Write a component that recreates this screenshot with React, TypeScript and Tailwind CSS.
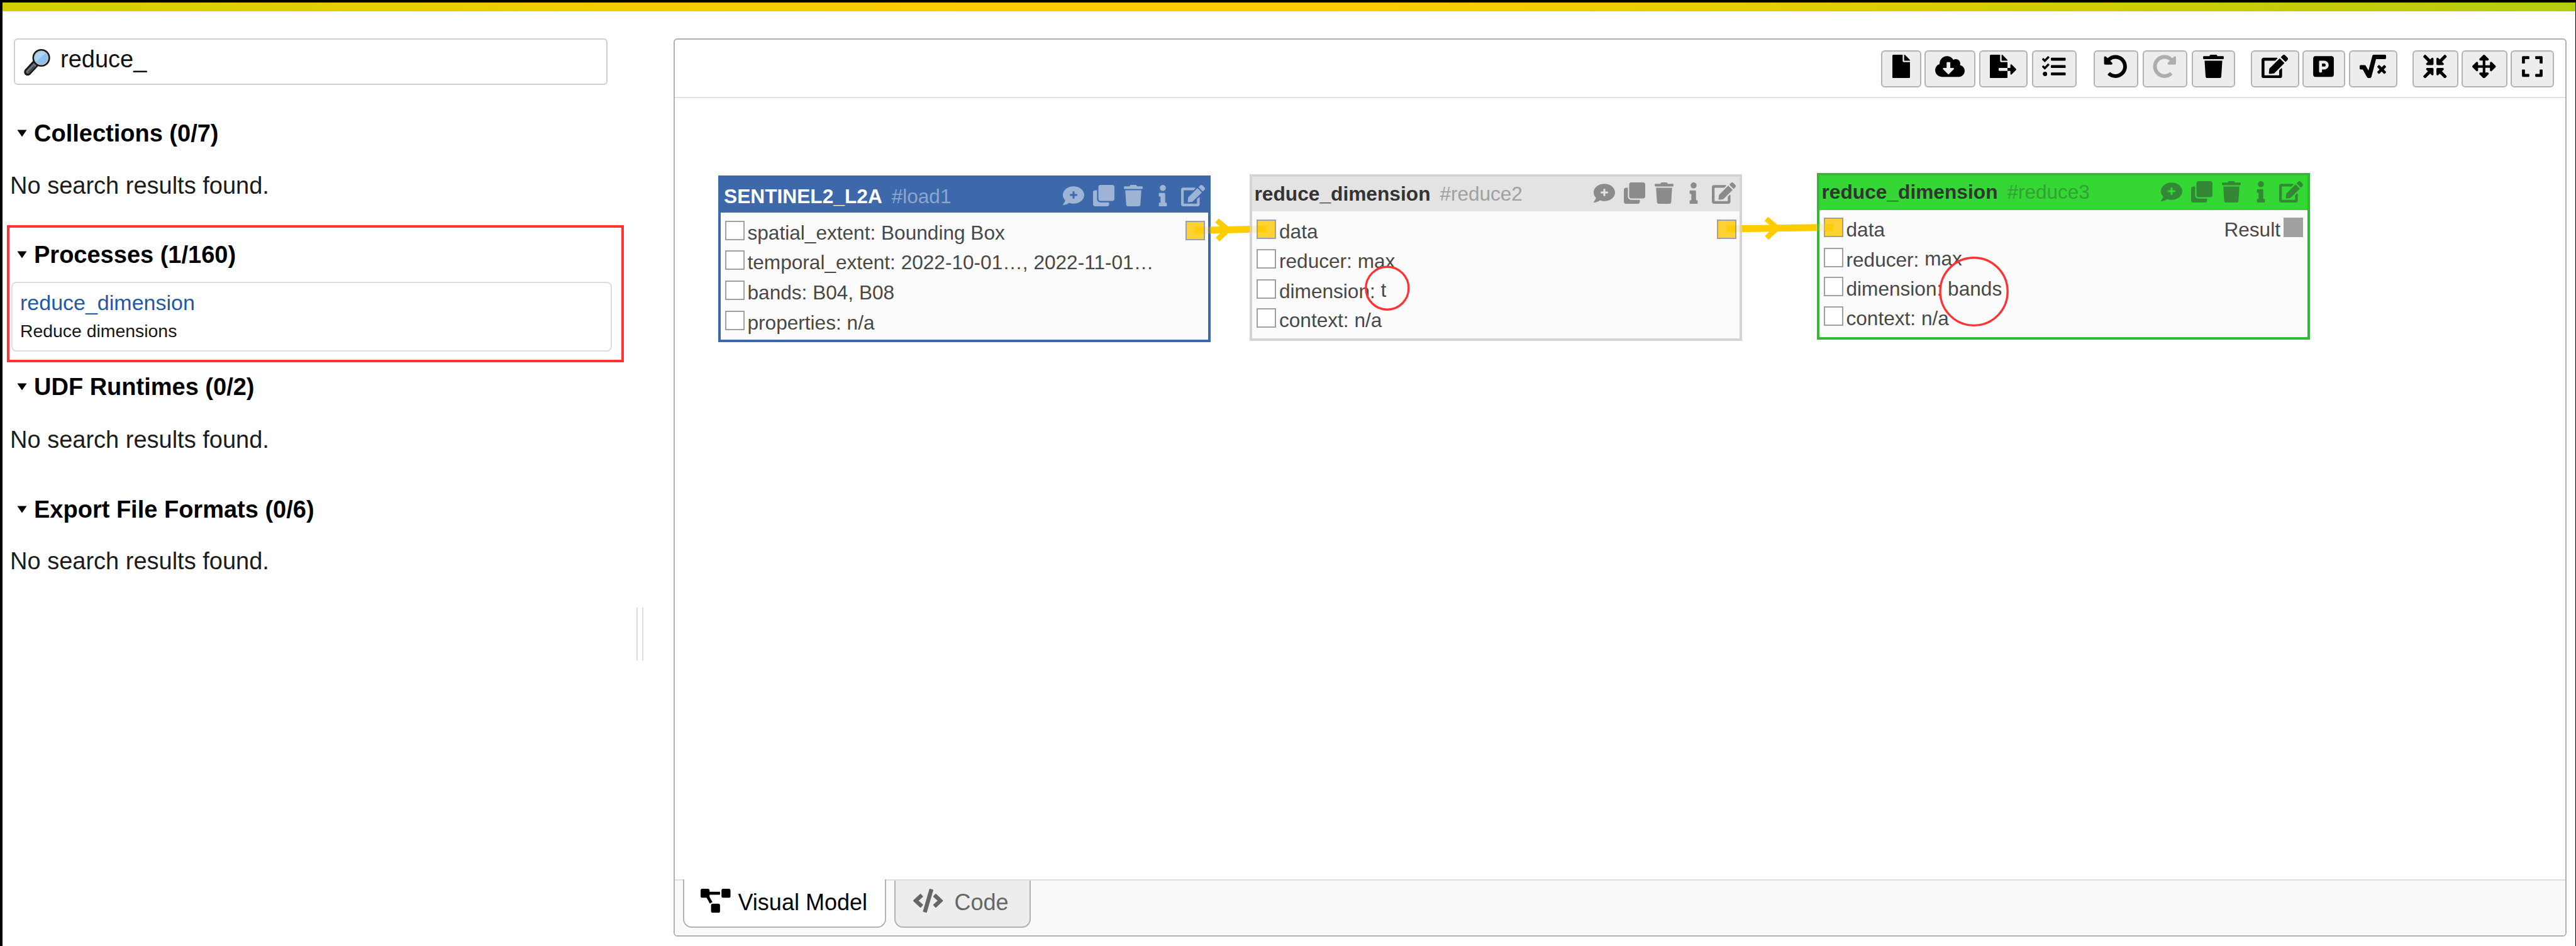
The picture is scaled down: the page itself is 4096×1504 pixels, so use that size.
import React from 'react';
import {
  FaFile,
  FaCloudDownloadAlt,
  FaFileExport,
  FaTasks,
  FaUndoAlt,
  FaRedoAlt,
  FaTrash,
  FaEdit,
  FaParking,
  FaSquareRootAlt,
  FaCompressArrowsAlt,
  FaArrowsAlt,
  FaExpand,
  FaClone,
  FaInfo,
  FaProjectDiagram,
  FaCode,
} from 'react-icons/fa';

function SearchGlyph() {
  return (
    <svg className="block h-[46px] w-[46px] shrink-0" viewBox="0 0 46 46">
      <path d="M21 24.5 L8 38.5" stroke="#16181a" strokeWidth="11.5" strokeLinecap="round" />
      <path d="M20 26 L8.5 38" stroke="#6d7479" strokeWidth="6" strokeLinecap="round" />
      <path d="M9.5 39 L18 30" stroke="#43494e" strokeWidth="2.5" strokeLinecap="round" />
      <circle cx="29.6" cy="16" r="12.6" fill="#8cc3ee" stroke="#16181a" strokeWidth="3" />
      <path d="M20.5 22.5 A11 11 0 0 1 37 8.2 Z" fill="#abd5f3" />
      <circle cx="29.6" cy="16" r="10.8" fill="none" stroke="#b9bcc0" strokeWidth="1.4" />
    </svg>
  );
}

function CommentPlus({ className }: { className?: string }) {
  return (
    <svg className={className} viewBox="0 0 512 512" fill="currentColor">
      <path
        fillRule="evenodd"
        d="M256 32C114.6 32 0 125.1 0 240c0 49.6 21.4 95 57 130.7C44.5 421.1 2.7 466 2.2 466.5c-2.2 2.3-2.8 5.7-1.5 8.7S4.8 480 8 480c66.3 0 116-31.8 140.6-51.4 32.7 12.3 69 19.4 107.4 19.4 141.4 0 256-93.1 256-208S397.4 32 256 32z M234 154h44v64h64v44h-64v64h-44v-64h-64v-44h64z"
      />
    </svg>
  );
}

function Heading({ children, className }: { children: React.ReactNode; className: string }) {
  return (
    <div className={`flex h-10 items-start ${className}`}>
      <svg className="mt-[14px] h-[12px] w-[16px] shrink-0" viewBox="0 0 16 12">
        <path d="M0.5 0.5 H15.5 L8 11.5 Z" fill="#000" />
      </svg>
      <h3 className="ml-[11px] text-[38px] leading-[40px] font-bold whitespace-nowrap text-black">{children}</h3>
    </div>
  );
}

function NoResults({ className }: { className: string }) {
  return (
    <p className={`ml-[12px] text-[38px] leading-[40px] whitespace-nowrap text-[#1c1c1c] ${className}`}>
      No search results found.
    </p>
  );
}

function Sidebar() {
  return (
    <aside className="flex w-[1067px] shrink-0">
      <div className="flex w-[988px] flex-col">
        <div className="mt-[43px] ml-[18px] flex h-[74px] w-[944px] items-start rounded-[6px] border-2 border-[#cfcfcf] bg-white">
          <div className="mt-[13px] ml-[12px]">
            <SearchGlyph />
          </div>
          <span className="mt-[11px] ml-[14px] text-[38px] leading-[40px] text-[#111]">reduce_</span>
        </div>
        <Heading className="mt-[57px] ml-[23px]">Collections (0/7)</Heading>
        <NoResults className="mt-[43px]" />
        <section className="mt-[43px] ml-[7px] h-[218px] w-[981px] border-4 border-[#ff3333]">
          <Heading className="mt-[23px] ml-[12px]">Processes (1/160)</Heading>
          <div className="mt-[23px] ml-[3px] h-[111px] w-[955px] rounded-[8px] border-2 border-[#dedede] pl-[12px]">
            <a className="mt-[11px] block text-[34px] leading-[40px] text-[#2559a3]">reduce_dimension</a>
            <p className="mt-[7px] text-[28.4px] leading-[36px] text-[#161616]">Reduce dimensions</p>
          </div>
        </section>
        <Heading className="mt-[19px] ml-[23px]">UDF Runtimes (0/2)</Heading>
        <NoResults className="mt-[44px]" />
        <Heading className="mt-[71px] ml-[23px]">Export File Formats (0/6)</Heading>
        <NoResults className="mt-[42px]" />
      </div>
      <div className="mt-[948px] ml-[20px] h-[84px] w-[11px] border-x-2 border-[#dcdcdc]" />
    </aside>
  );
}

const tools = [
  { Icon: FaFile, box: 'w-[64px]', icon: 'w-[28px]' },
  { Icon: FaCloudDownloadAlt, box: 'w-[81px] ml-[5px]', icon: 'w-[47px]' },
  { Icon: FaFileExport, box: 'w-[77px] ml-[6px]', icon: 'w-[42px]' },
  { Icon: FaTasks, box: 'w-[71px] ml-[7px]', icon: 'w-[37.5px]' },
  { Icon: FaUndoAlt, box: 'w-[71px] ml-[27px]', icon: 'w-[37.5px]' },
  { Icon: FaRedoAlt, box: 'w-[71px] ml-[7px] text-[#adadad]', icon: 'w-[37.5px]' },
  { Icon: FaTrash, box: 'w-[69px] ml-[7px]', icon: 'w-[33px]' },
  { Icon: FaEdit, box: 'w-[77px] ml-[25px]', icon: 'w-[42px]' },
  { Icon: FaParking, box: 'w-[68px] ml-[5px]', icon: 'w-[33px]' },
  { Icon: FaSquareRootAlt, box: 'w-[77px] ml-[6px]', icon: 'w-[42px]' },
  { Icon: FaCompressArrowsAlt, box: 'w-[73px] ml-[24px]', icon: 'w-[37.5px]' },
  { Icon: FaArrowsAlt, box: 'w-[73px] ml-[5px]', icon: 'w-[37.5px]' },
  { Icon: FaExpand, box: 'w-[69px] ml-[5px]', icon: 'w-[33px]' },
];

function Toolbar() {
  return (
    <div className="flex h-[93px] shrink-0 items-start justify-end border-b-2 border-[#e0e0e0] pt-[17px] pr-[18.5px]">
      {tools.map(({ Icon, box, icon }, i) => (
        <button
          key={i}
          className={`flex h-[59px] shrink-0 items-start justify-center rounded-[6px] border-2 border-[#b2b2b2] bg-[#ededed] pt-[4.5px] ${box}`}
        >
          <Icon className={`h-[37.5px] ${icon}`} />
        </button>
      ))}
    </div>
  );
}

type Row = { label: string; value?: string; valueShift?: boolean; filled?: boolean; height: string };

type NodeSpec = {
  title: string;
  id: string;
  rows: Row[];
  place: string;
  head: string;
  body: string;
  titleColor: string;
  idColor: string;
  iconColor: string;
  titleTop: string;
  iconTop: string;
  out: string;
  result?: boolean;
};

const nodes: NodeSpec[] = [
  {
    title: 'SENTINEL2_L2A',
    id: '#load1',
    place: 'left-[69px] top-[123px] w-[783px] h-[265px] border-[#3d69ab] bg-[#fbfbfb]',
    head: 'bg-[#3d69ab] pl-[5px] pr-[5.5px]',
    body: 'pl-[6.5px] pt-[12.7px]',
    titleColor: 'text-white',
    idColor: 'text-[#8ba6cf]',
    iconColor: 'text-[#9db4d5]',
    titleTop: 'mt-[8.5px]',
    iconTop: 'mt-[10.5px]',
    out: 'right-[5px]',
    rows: [
      { label: 'spatial_extent:', value: 'Bounding Box', height: 'h-[47.7px]' },
      { label: 'temporal_extent:', value: '2022-10-01…, 2022-11-01…', height: 'h-[47.7px]' },
      { label: 'bands:', value: 'B04, B08', height: 'h-[47.7px]' },
      { label: 'properties:', value: 'n/a', height: 'h-[40px]' },
    ],
  },
  {
    title: 'reduce_dimension',
    id: '#reduce2',
    place: 'left-[914px] top-[121px] w-[783px] h-[265px] border-[#d4d4d4] bg-[#fbfbfb]',
    head: 'bg-[#e3e3e3] pl-[3.5px] pr-[6.5px]',
    body: 'pl-[7px] pt-[12.7px]',
    titleColor: 'text-[#333]',
    idColor: 'text-[#a0a0a0]',
    iconColor: 'text-[#8b8b8b]',
    titleTop: 'mt-[6.7px]',
    iconTop: 'mt-[9px]',
    out: 'right-[5px]',
    rows: [
      { label: 'data', filled: true, height: 'h-[47.6px]' },
      { label: 'reducer:', value: 'max', height: 'h-[47.7px]' },
      { label: 'dimension:', value: 't', valueShift: true, height: 'h-[45.7px]' },
      { label: 'context:', value: 'n/a', height: 'h-[40px]' },
    ],
  },
  {
    title: 'reduce_dimension',
    id: '#reduce3',
    place: 'left-[1815.5px] top-[118.7px] w-[784.5px] h-[265.5px] border-[#34b934] bg-[#fbfbfb]',
    head: 'bg-[#35d735] pl-[4px] pr-[7.5px]',
    body: 'pl-[7px] pt-[12.7px]',
    titleColor: 'text-[#333]',
    idColor: 'text-[#34a034]',
    iconColor: 'text-[#348734]',
    titleTop: 'mt-[6.3px]',
    iconTop: 'mt-[9.2px]',
    out: 'right-[7px]',
    result: true,
    rows: [
      { label: 'data', filled: true, height: 'h-[47.6px]' },
      { label: 'reducer:', value: 'max', valueShift: true, height: 'h-[45.7px]' },
      { label: 'dimension:', value: 'bands', height: 'h-[47.7px]' },
      { label: 'context:', value: 'n/a', height: 'h-[40px]' },
    ],
  },
];

function ModelNode({ n }: { n: NodeSpec }) {
  return (
    <div className={`absolute border-4 ${n.place}`}>
      <div className={`flex h-[55px] items-start ${n.head}`}>
        <span className={`text-[31.7px] leading-[40px] font-bold whitespace-nowrap ${n.titleColor} ${n.titleTop}`}>
          {n.title}
        </span>
        <span className={`ml-[15px] text-[31.5px] leading-[40px] whitespace-nowrap ${n.idColor} ${n.titleTop}`}>
          {n.id}
        </span>
        <div className={`ml-auto flex h-[34px] items-center ${n.iconColor} ${n.iconTop}`}>
          <CommentPlus className="h-[34px] w-[34px]" />
          <FaClone className="ml-[14px] h-[34px] w-[34px]" />
          <FaTrash className="ml-[15px] h-[34px] w-[30px]" />
          <FaInfo className="ml-[25px] h-[34px] w-[14px]" />
          <FaEdit className="ml-[22px] h-[34px] w-[38px]" />
        </div>
      </div>
      <div className={`relative ${n.body}`}>
        {n.rows.map((r) => (
          <div key={r.label} className={`flex items-start ${r.height}`}>
            <span
              className={`h-[31px] w-[31px] shrink-0 border-2 border-[#a0a0a0] ${r.filled ? 'bg-[#ffd133]' : 'bg-white'}`}
            />
            <span className="ml-[5px] text-[31.6px] leading-[39.2px] whitespace-pre text-[#484848]">{r.label}</span>
            {r.value && (
              <span
                className={`ml-[8.8px] text-[31.6px] leading-[39.2px] whitespace-pre text-[#484848] ${r.valueShift ? '-mt-[2px]' : ''}`}
              >
                {r.value}
              </span>
            )}
          </div>
        ))}
        <div className={`absolute top-[12.7px] flex items-start ${n.out}`}>
          {n.result && <span className="mr-[5px] text-[31.6px] leading-[39.2px] text-[#484848]">Result</span>}
          <span className={`h-[31px] w-[31px] border-2 border-[#a0a0a0] ${n.result ? 'bg-[#a0a0a0]' : 'bg-[#ffd133]'}`} />
        </div>
      </div>
    </div>
  );
}

function Canvas() {
  return (
    <div className="relative min-h-0 flex-1 overflow-hidden bg-white">
      {nodes.map((n) => (
        <ModelNode key={n.id} n={n} />
      ))}
      {/* Connectors and highlight rings drawn over the nodes */}
      <svg className="absolute top-0 left-0 h-[1242px] w-[3006px]" viewBox="1073 156 3006 1242" fill="none">
        <g stroke="#ffcc00" strokeWidth="11">
          <path d="M1900 366.3 L1914 366" opacity="0.85" />
          <path d="M1916 366 L1924 365.9" opacity="0.2" />
          <path d="M1924.5 365.9 L1987 364.6" />
          <path d="M1987 364.6 L1998 364.3" opacity="0.2" />
          <path d="M2000 364.2 L2012.7 363.9" opacity="0.85" />
          <path d="M2745 363.8 L2759 363.6" opacity="0.85" />
          <path d="M2761 363.6 L2770 363.5" opacity="0.2" />
          <path d="M2770 363.5 L2888.5 361.8" />
          <path d="M2888.5 361.8 L2899 361.6" opacity="0.2" />
          <path d="M2901 361.6 L2915 361.2" opacity="0.85" />
        </g>
        <path d="M1935 350.5 L1952.5 365.2 L1936 380.8" stroke="#ffcc00" strokeWidth="8.5" />
        <path d="M2808.5 348 L2826 362.6 L2809 378.2" stroke="#ffcc00" strokeWidth="8.5" />
        <circle cx="2205.8" cy="458.2" r="34" stroke="#ff3333" strokeWidth="3.4" />
        <ellipse cx="3138.6" cy="463.6" rx="53.6" ry="53.8" stroke="#ff3333" strokeWidth="3.4" />
      </svg>
    </div>
  );
}

function Tabs() {
  return (
    <div className="flex h-[89px] shrink-0 items-start border-t-2 border-[#dedede] bg-[#f9f9f9]">
      <div className="-mt-[2px] ml-[13px] flex h-[77px] w-[323px] items-start rounded-b-[14px] border-2 border-t-0 border-[#b2b2b2] bg-white pl-[26px] text-black">
        <FaProjectDiagram className="mt-[15px] h-[38px] w-[47.5px]" />
        <span className="mt-[17px] ml-[12px] text-[36px] leading-[40px] whitespace-nowrap">Visual Model</span>
      </div>
      <div className="ml-[13px] flex h-[75px] w-[217px] items-start rounded-b-[14px] border-2 border-t-0 border-[#b2b2b2] bg-[#ededed] pl-[28px] text-[#666]">
        <FaCode className="mt-[13px] h-[38px] w-[47.5px]" />
        <span className="mt-[15px] ml-[18px] text-[36px] leading-[40px] whitespace-nowrap">Code</span>
      </div>
    </div>
  );
}

export default function App() {
  return (
    <div className="flex h-[1504px] w-[4096px] flex-col overflow-hidden border-t-4 border-r border-l-4 border-black bg-white font-['Liberation_Sans',Arial,sans-serif]">
      <div className="h-[14px] shrink-0 bg-[linear-gradient(90deg,#d2d000_0%,#f4cb00_25%,#ffcb00_40%,#ffcb00_52%,#d8cd00_76%,#b4cc10_100%)]" />
      <div className="flex min-h-0 flex-1">
        <Sidebar />
        <main className="mt-[43px] flex h-[1428px] w-[3010px] shrink-0 flex-col overflow-hidden rounded-[6px] border-2 border-[#b0b0b0] bg-white">
          <Toolbar />
          <Canvas />
          <Tabs />
        </main>
      </div>
    </div>
  );
}
